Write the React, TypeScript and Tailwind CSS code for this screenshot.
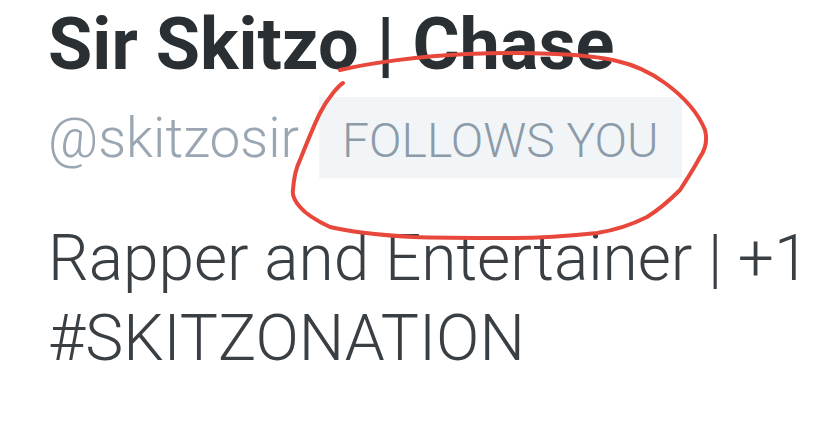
export default function App() {
  return (
    <div className="relative h-[423px] w-[813px] overflow-hidden bg-white font-['Roboto',sans-serif]">
      <div className="flex flex-col pl-[48px]">
        <h1 className="mt-[5px] whitespace-nowrap text-[72px] font-bold leading-[80px] text-[#292f33]">
          Sir Skitzo | Chase
        </h1>
        <div className="mt-[12px] flex items-baseline gap-[20px]">
          <span className="text-[55px] font-light leading-[81px] text-[#9aa6b1]">@skitzosir</span>
          <span className="h-[81px] bg-[#f2f5f8] px-[23px] pt-[6px] text-[48px] font-light leading-[75px] text-[#8d9ba8]">
            FOLLOWS YOU
          </span>
        </div>
        <p className="mt-[40px] whitespace-nowrap text-[64px] font-light leading-[80px] text-[#3a3f44]">
          Rapper and Entertainer | +1
          <br />
          #SKITZONATION
        </p>
      </div>
      {/* hand-drawn red loop over the badge */}
      <svg className="absolute left-0 top-0" width="813" height="423" viewBox="0 0 813 423" fill="none">
        <path
          d="M340 70 C370 63 420 56 467 54 C520 52 585 53 617 61 C635 65 650 72 665 83 C680 94 697 110 705 130 C708 142 705 150 700 157 C692 172 685 182 680 190 C665 205 655 212 647 217 C625 228 610 231 597 233 C560 237 540 238 513 238 C470 238 440 238 413 237 C380 235 350 232 330 227 C315 220 305 213 300 207 C294 200 292 195 293 190 C294 175 296 168 300 160 C308 140 314 125 320 113 C325 103 329 98 333 93 C337 88 340 85 343 83"
          stroke="#e8473b"
          strokeWidth="4"
          strokeLinecap="round"
        />
      </svg>
    </div>
  );
}
